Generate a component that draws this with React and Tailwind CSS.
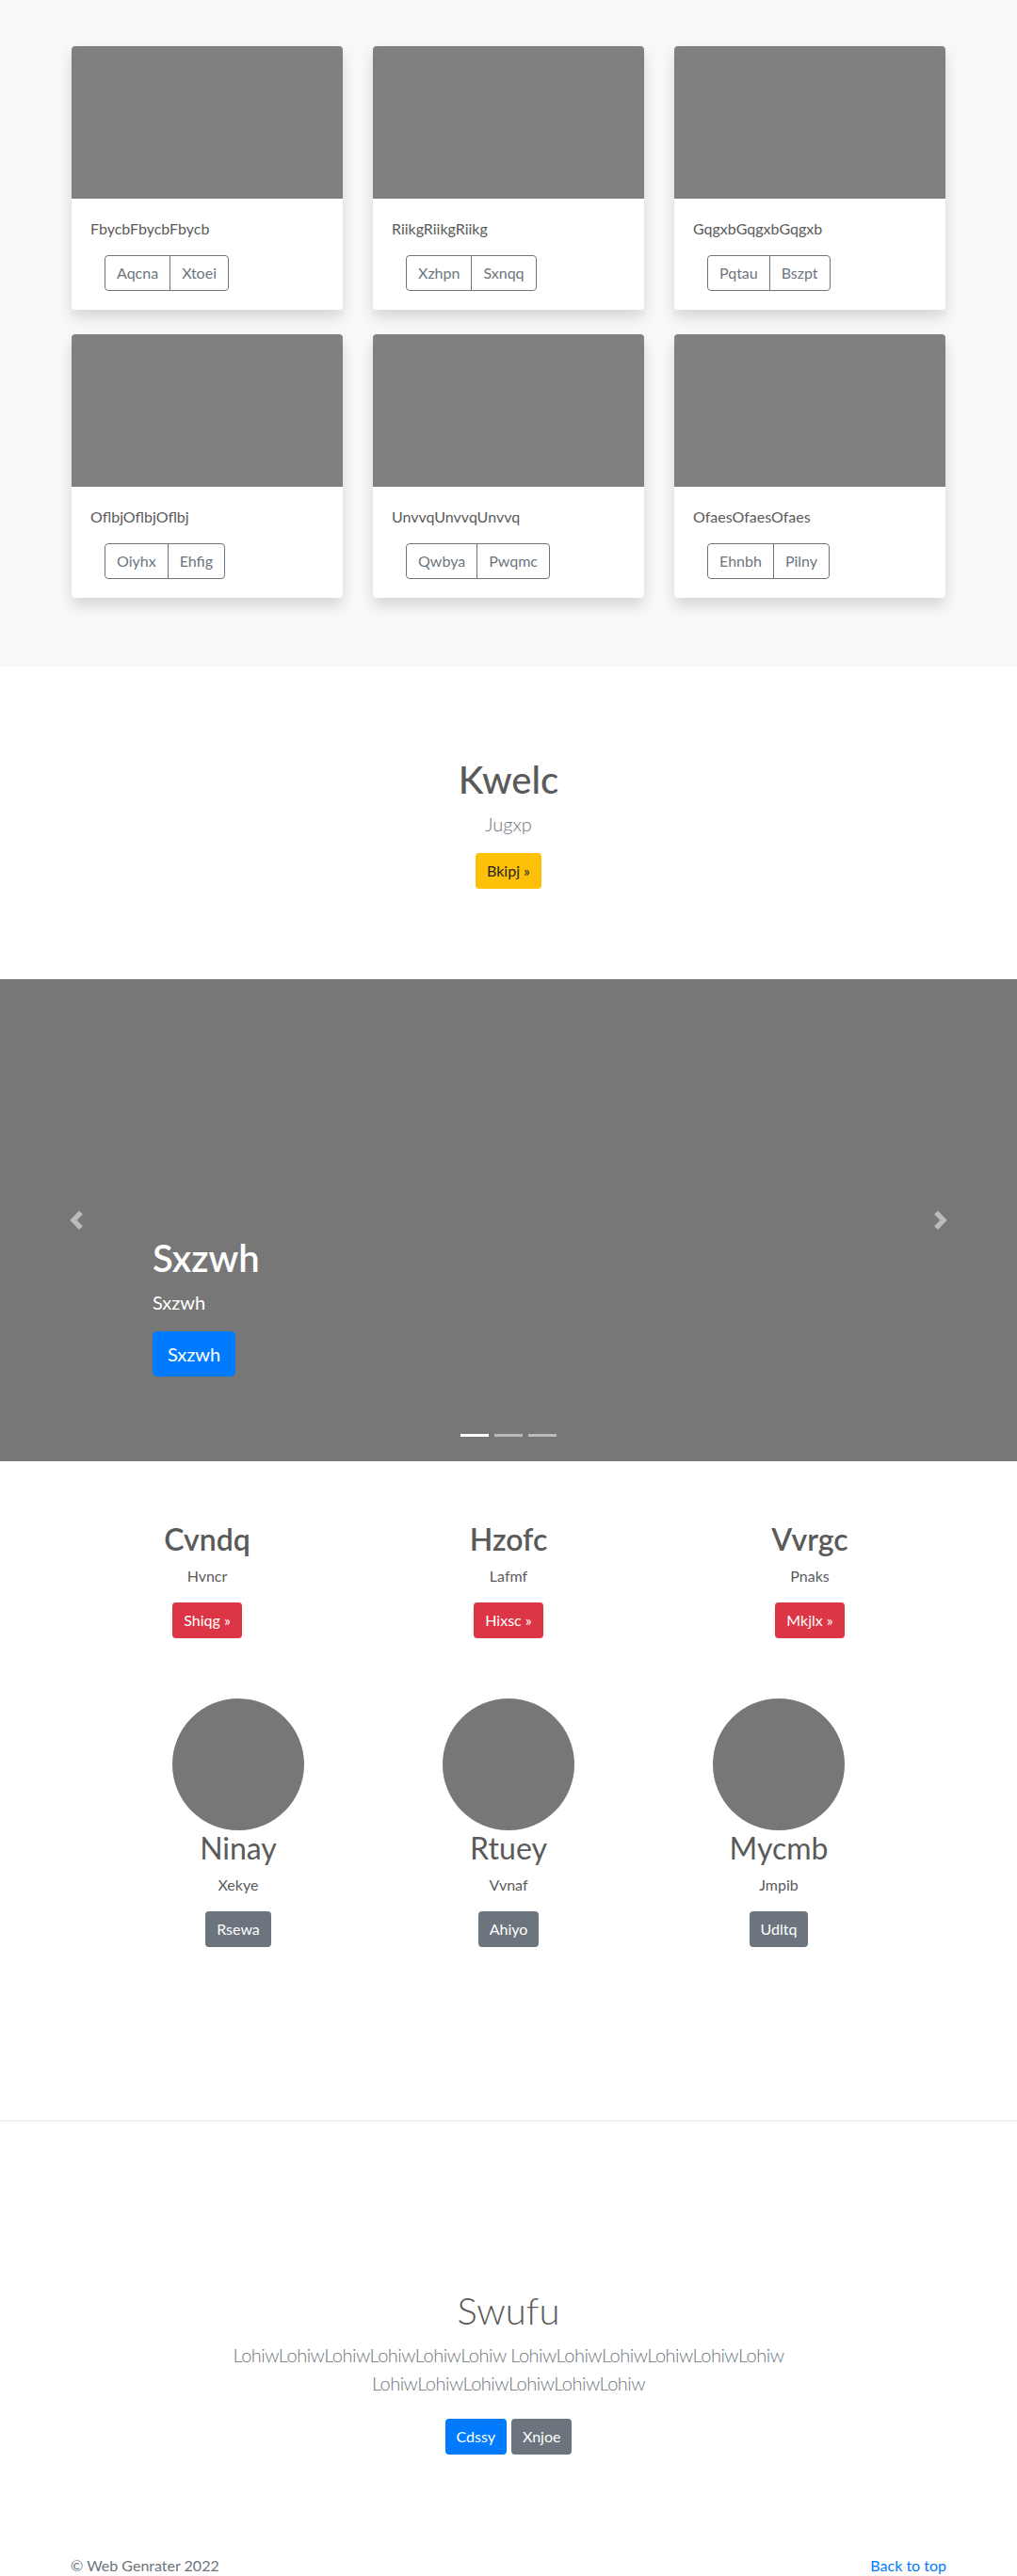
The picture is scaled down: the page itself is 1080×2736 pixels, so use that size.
import React from 'react';

const cards = [
    { title: 'FbycbFbycbFbycb', a: 'Aqcna', b: 'Xtoei' },
    { title: 'RiikgRiikgRiikg', a: 'Xzhpn', b: 'Sxnqq' },
    { title: 'GqgxbGqgxbGqgxb', a: 'Pqtau', b: 'Bszpt' },
    { title: 'OflbjOflbjOflbj', a: 'Oiyhx', b: 'Ehfig' },
    { title: 'UnvvqUnvvqUnvvq', a: 'Qwbya', b: 'Pwqmc' },
    { title: 'OfaesOfaesOfaes', a: 'Ehnbh', b: 'Pilny' },
];

const features = [
    { title: 'Cvndq', text: 'Hvncr', btn: 'Shiqg »' },
    { title: 'Hzofc', text: 'Lafmf', btn: 'Hixsc »' },
    { title: 'Vvrgc', text: 'Pnaks', btn: 'Mkjlx »' },
];

const people = [
    { name: 'Ninay', text: 'Xekye', btn: 'Rsewa' },
    { name: 'Rtuey', text: 'Vvnaf', btn: 'Ahiyo' },
    { name: 'Mycmb', text: 'Jmpib', btn: 'Udltq' },
];

const Chevron = ({ dir }) => (
    <svg width="20" height="20" viewBox="0 0 8 8" fill="#fff" className="opacity-50">
        {dir === 'prev' ? (
            <path d="M5.25 0l-4 4 4 4 1.5-1.5L4.25 4l2.5-2.5L5.25 0z" />
        ) : (
            <path d="M2.75 0l-1.5 1.5L3.75 4l-2.5 2.5L2.75 8l4-4-4-4z" />
        )}
    </svg>
);

const App = () => {
    return (
        <div className="font-[family-name:Lato,'Noto_Sans',sans-serif] text-[#5a5a5a] bg-white min-h-[2736px]">
            {/* Album cards */}
            <section className="bg-[#f8f9fa] pt-[49px] pb-[73px]">
                <div className="w-[928px] mx-auto grid grid-cols-3 gap-x-8 gap-y-[26px]">
                    {cards.map((c) => (
                        <div key={c.title} className="bg-white rounded shadow-[0_8px_16px_rgba(0,0,0,0.15)] overflow-hidden">
                            <div className="h-[162px] bg-[#808080]"></div>
                            <div className="p-5">
                                <p className="text-[16px] leading-6">{c.title}</p>
                                <div className="flex mt-4 ml-[15px] text-[#6c757d] text-[16px]">
                                    <button className="h-[38px] px-3 border border-[#6c757d] rounded-l">{c.a}</button>
                                    <button className="h-[38px] px-3 border border-[#6c757d] -ml-px rounded-r">{c.b}</button>
                                </div>
                            </div>
                        </div>
                    ))}
                </div>
            </section>

            {/* Hero */}
            <section className="pt-[96px] pb-[96px] flex flex-col items-center text-center">
                <h1 className="text-[40px] leading-[48px] font-medium mb-2">Kwelc</h1>
                <p className="text-[20px] leading-[30px] font-light text-[#6c757d] mb-4">Jugxp</p>
                <button className="h-[38px] px-3 rounded bg-[#ffc107] text-[#212529] text-[16px]">Bkipj »</button>
            </section>

            {/* Carousel */}
            <section className="relative h-[512px] bg-[#777777] text-white">
                <div className="absolute left-0 top-0 bottom-0 w-[15%] flex items-center justify-center">
                    <Chevron dir="prev" />
                </div>
                <div className="absolute right-0 top-0 bottom-0 w-[15%] flex items-center justify-center">
                    <Chevron dir="next" />
                </div>
                <div className="absolute left-[15%] bottom-[90px] flex flex-col items-start">
                    <h1 className="text-[40px] leading-[48px] font-semibold mb-2">Sxzwh</h1>
                    <p className="text-[20px] leading-[30px] mb-4">Sxzwh</p>
                    <button className="h-[48px] px-4 rounded-[5px] bg-[#007bff] text-[20px]">Sxzwh</button>
                </div>
                <div className="absolute left-0 right-0 bottom-[26px] flex justify-center gap-[6px]">
                    <span className="w-[30px] h-[3px] bg-white"></span>
                    <span className="w-[30px] h-[3px] bg-white/50"></span>
                    <span className="w-[30px] h-[3px] bg-white/50"></span>
                </div>
            </section>

            {/* Marketing columns */}
            <section className="pt-[64px] pb-[184px]">
                <div className="w-[960px] mx-auto grid grid-cols-3">
                    {features.map((f) => (
                        <div key={f.title} className="flex flex-col items-center text-center">
                            <h2 className="text-[32px] leading-[38px] font-semibold mb-2">{f.title}</h2>
                            <p className="text-[16px] leading-6 mb-4">{f.text}</p>
                            <button className="h-[38px] px-3 rounded bg-[#dc3545] text-white text-[16px]">{f.btn}</button>
                        </div>
                    ))}
                </div>
                <div className="w-[861px] mx-auto grid grid-cols-3 mt-[64px]">
                    {people.map((p) => (
                        <div key={p.name} className="flex flex-col items-center text-center">
                            <div className="w-[140px] h-[140px] rounded-full bg-[#777777]"></div>
                            <h2 className="text-[32px] leading-[38px] font-normal mb-2">{p.name}</h2>
                            <p className="text-[16px] leading-6 mb-4">{p.text}</p>
                            <button className="h-[38px] px-3 rounded bg-[#6c757d] text-white text-[16px]">{p.btn}</button>
                        </div>
                    ))}
                </div>
            </section>

            <hr className="border-0 border-t border-[#e5e5e5]" />

            {/* Jumbotron */}
            <section className="pt-[177px] flex flex-col items-center text-center">
                <h1 className="text-[40px] leading-[48px] font-light mb-2">Swufu</h1>
                <p className="w-[700px] text-[20px] leading-[30px] font-light tracking-[-0.5px] text-[#6c757d]">
                    LohiwLohiwLohiwLohiwLohiwLohiw LohiwLohiwLohiwLohiwLohiwLohiw LohiwLohiwLohiwLohiwLohiwLohiw
                </p>
                <div className="flex gap-[5px] mt-[23px]">
                    <button className="h-[38px] px-3 rounded bg-[#007bff] text-white text-[16px]">Cdssy</button>
                    <button className="h-[38px] px-3 rounded bg-[#6c757d] text-white text-[16px]">Xnjoe</button>
                </div>
            </section>

            {/* Footer */}
            <footer className="pt-[106px] pb-12">
                <div className="w-[930px] mx-auto flex justify-between text-[16px] leading-6 text-[#6c757d]">
                    <p>© Web Genrater 2022</p>
                    <a href="#" className="text-[#007bff]">Back to top</a>
                </div>
            </footer>
        </div>
    );
};

export default App;
